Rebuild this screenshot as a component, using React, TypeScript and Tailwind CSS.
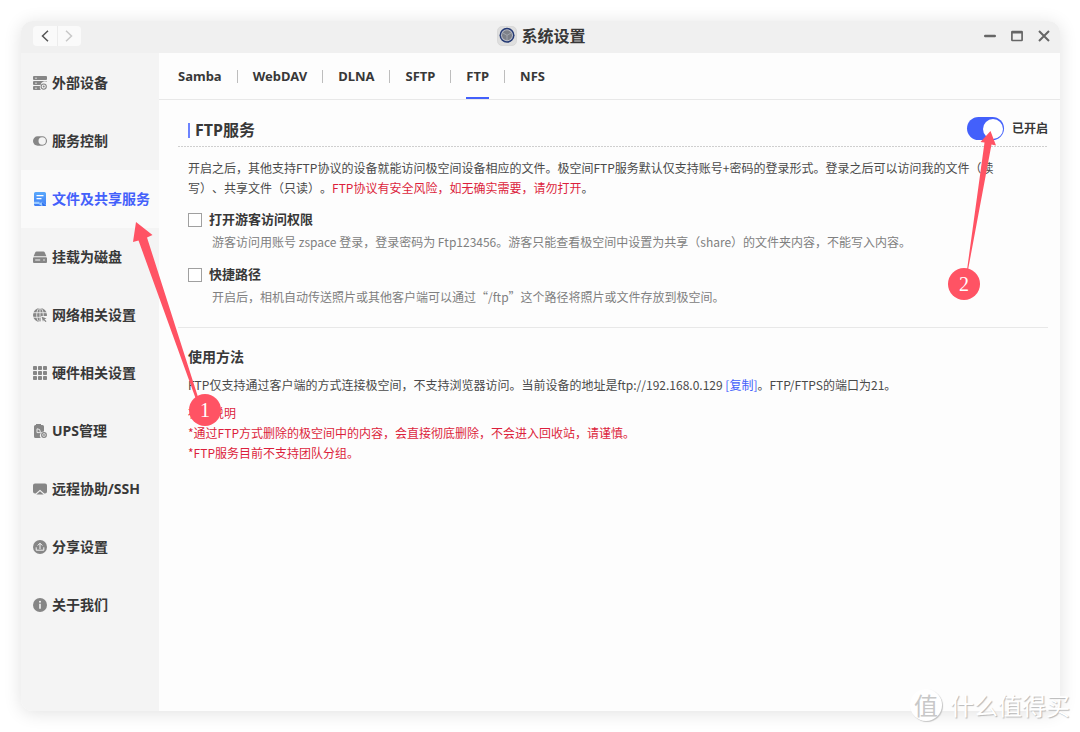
import { Fragment, type ReactNode } from "react";

type NavItem = { label: string; icon: ReactNode; active?: boolean };

const Icon = ({ children }: { children: ReactNode }) => (
  <svg viewBox="0 0 14 14" className="size-3.5 shrink-0" fill="#868686" aria-hidden="true">
    {children}
  </svg>
);

const navItems: NavItem[] = [
  {
    label: "外部设备",
    icon: (
      <Icon>
        <rect x="0" y="0" width="14" height="4" rx="1" />
        <path d="M1 5h12a1 1 0 0 1 1 .9A4.3 4.3 0 0 0 7.6 9H1a1 1 0 0 1-1-1V6a1 1 0 0 1 1-1z" />
        <path d="M1 10h6a4 4 0 0 0 .8 4H1a1 1 0 0 1-1-1v-2a1 1 0 0 1 1-1z" />
        <circle cx="10.7" cy="10.6" r="2.6" fill="none" stroke="#868686" strokeWidth="1.1" />
        <circle cx="10.7" cy="10.6" r="1" />
        <path d="M2 1.7h2v.7H2zM2 6.7h2v.7H2zM2 11.7h2v.7H2z" fill="#f4f4f4" />
      </Icon>
    ),
  },
  {
    label: "服务控制",
    icon: (
      <Icon>
        <rect x="0" y="2.3" width="14" height="9.4" rx="4.7" />
        <circle cx="9.2" cy="7" r="3.7" fill="#f4f4f4" />
      </Icon>
    ),
  },
  {
    label: "文件及共享服务",
    active: true,
    icon: (
      <svg viewBox="0 0 14 14" className="size-3.5 shrink-0" aria-hidden="true">
        <defs>
          <linearGradient id="docFill" x1="0" y1="0" x2="0" y2="1">
            <stop offset="0" stopColor="#5aa9fb" />
            <stop offset="1" stopColor="#3f7df6" />
          </linearGradient>
        </defs>
        <path d="M2.5 0h9A1.5 1.5 0 0 1 13 1.5V14H2.5A1.5 1.5 0 0 1 1 12.5v-11A1.5 1.5 0 0 1 2.5 0z" fill="url(#docFill)" />
        <path d="M3.5 3.6h7M3.5 6.6h5" stroke="#fff" strokeWidth="1.1" />
        <path d="M1 9.8h5.5v1.6L9 9.4l1.5 1.5L13 13v1H9l-2.500-1.600-1-.4H1z" fill="#9cccff" />
        <path d="M8.500 9.500 13 13.500v.5H9.500z" fill="#2f72ee" />
      </svg>
    ),
  },
  {
    label: "挂载为磁盘",
    icon: (
      <Icon>
        <path d="M3.6 1.5h6.8a1.5 1.5 0 0 1 1.4 1L13.4 6.3H.6L2.2 2.5a1.5 1.5 0 0 1 1.4-1z" />
        <path d="M1 7.2h12a1 1 0 0 1 1 1V12a1 1 0 0 1-1 1H1a1 1 0 0 1-1-1V8.2a1 1 0 0 1 1-1z" />
        <path d="M2.2 9.6h5v1h-5zM10.2 9.6h1.6v1h-1.6z" fill="#f4f4f4" />
      </Icon>
    ),
  },
  {
    label: "网络相关设置",
    icon: (
      <Icon>
        <circle cx="7" cy="7" r="7" />
        <g fill="none" stroke="#f4f4f4" strokeWidth=".8">
          <ellipse cx="7" cy="7" rx="3.3" ry="7" />
          <path d="M7 0v14M0 4.7h14M0 9.3h14" />
        </g>
        <path d="M8 8h6v6H8z" fill="#f4f4f4" />
        <path d="m8.5 8.5 5 2-2 .8 2 2-.9.8-2-2-.6 1.7z" />
      </Icon>
    ),
  },
  {
    label: "硬件相关设置",
    icon: (
      <Icon>
        {[0, 5, 10].map((y) =>
          [0, 5, 10].map((x) => <rect key={`${x}-${y}`} x={x} y={y} width="4" height="4" rx=".8" />),
        )}
      </Icon>
    ),
  },
  {
    label: "UPS管理",
    icon: (
      <Icon>
        <path d="M3 0h5v1h1.5A1.5 1.5 0 0 1 11 2.5v5a4 4 0 0 0-3.3 6.5H2.5A1.5 1.5 0 0 1 1 12.5v-10A1.5 1.5 0 0 1 2.5 1H3z" />
        <path d="M4 4.8v3.8h3.5l-.9-3.1z" fill="none" stroke="#f4f4f4" strokeWidth=".9" />
        <circle cx="11" cy="11" r="2.3" fill="none" stroke="#868686" strokeWidth="1.3" />
        <circle cx="11" cy="11" r=".9" />
      </Icon>
    ),
  },
  {
    label: "远程协助/SSH",
    icon: (
      <Icon>
        <path d="M2 1.5h10a2 2 0 0 1 2 2v6a2 2 0 0 1-2 2h-.7L7 7.7l-4.3 3.8H2a2 2 0 0 1-2-2v-6a2 2 0 0 1 2-2z" />
        <path d="m7 9.2 3.7 3.3H3.3z" />
      </Icon>
    ),
  },
  {
    label: "分享设置",
    icon: (
      <Icon>
        <circle cx="7" cy="7" r="7" />
        <path d="M7 9V3.5M4.7 5.5 7 3.2l2.3 2.3M3.2 7.3v2.9h7.6V7.3" fill="none" stroke="#f4f4f4" strokeWidth="1" />
      </Icon>
    ),
  },
  {
    label: "关于我们",
    icon: (
      <Icon>
        <circle cx="7" cy="7" r="7" />
        <circle cx="7" cy="3.7" r="1" fill="#f4f4f4" />
        <path d="M6.2 5.8h1.6v5H6.2z" fill="#f4f4f4" />
      </Icon>
    ),
  },
];

const tabs = ["Samba", "WebDAV", "DLNA", "SFTP", "FTP", "NFS"];

function AppLogo() {
  return (
    <svg viewBox="0 0 20 20" className="size-5" aria-hidden="true">
      <rect x=".5" y=".5" width="19" height="19" rx="4.5" fill="#dedede" stroke="#d0d0d0" strokeWidth=".6" />
      <circle cx="10" cy="9.3" r="7.5" fill="#253a74" />
      <circle cx="10" cy="9.3" r="6" fill="#b9bcc6" />
      <circle cx="10" cy="9.3" r="5" fill="#7d8088" />
      <path d="M10 9.3V14M10 9.3 6 7M10 9.3 14 7" stroke="#a9adb8" strokeWidth=".8" />
    </svg>
  );
}

function TitleBar() {
  return (
    <header className="grid h-8 shrink-0 grid-cols-[1fr_auto_1fr] items-center bg-[#f0f0f0] pr-2.5 pb-0.5 pl-3">
      <div className="flex h-5 w-12 divide-x divide-[#ececec] rounded bg-[#fafafa] text-[#555]">
        <button type="button" aria-label="后退" className="flex flex-1 items-center justify-center">
          <svg viewBox="0 0 8 12" className="h-3 w-2" fill="none" stroke="currentColor" strokeWidth="1.5">
            <path d="M7 .7 1.5 6 7 11.3" />
          </svg>
        </button>
        <button type="button" aria-label="前进" className="flex flex-1 items-center justify-center text-[#c8c8c8]">
          <svg viewBox="0 0 8 12" className="h-3 w-2" fill="none" stroke="currentColor" strokeWidth="1.5">
            <path d="M1 .7 6.5 6 1 11.3" />
          </svg>
        </button>
      </div>
      <div className="flex items-center gap-1">
        <AppLogo />
        <h1 className="text-base leading-5 font-bold">系统设置</h1>
      </div>
      <div className="flex items-center justify-end gap-[15px] text-[#666]">
        <button type="button" aria-label="最小化">
          <svg viewBox="0 0 12 12" className="size-3" stroke="currentColor" strokeWidth="2.4" strokeLinecap="round">
            <path d="M1.2 6h9.6" />
          </svg>
        </button>
        <button type="button" aria-label="最大化">
          <svg viewBox="0 0 12 12" className="size-3" fill="none" stroke="currentColor">
            <rect x=".9" y="1.5" width="10.2" height="9" rx=".5" strokeWidth="1.7" />
            <path d="M.9 2.3h10.2" strokeWidth="2.2" />
          </svg>
        </button>
        <button type="button" aria-label="关闭">
          <svg viewBox="0 0 12 12" className="size-3" stroke="currentColor" strokeWidth="2">
            <path d="m1 1 10 10M11 1 1 11" />
          </svg>
        </button>
      </div>
    </header>
  );
}

function Sidebar() {
  return (
    <nav className="w-[138px] shrink-0 bg-[#f4f4f4] pt-px">
      {navItems.map((item) => (
        <a
          key={item.label}
          href="#"
          className={
            item.active
              ? "flex h-[58px] items-center gap-[5px] bg-[#fafafa] pl-3 whitespace-nowrap text-[#4360fb]"
              : "flex h-[58px] items-center gap-[5px] pl-3 whitespace-nowrap"
          }
        >
          {item.icon}
          <span className="text-sm font-bold">{item.label}</span>
        </a>
      ))}
    </nav>
  );
}

function TabBar() {
  return (
    <div className="flex h-[47px] items-stretch gap-[15px] border-b border-[#e8e8e8] px-[19px]">
      {tabs.map((tab, i) => (
        <Fragment key={tab}>
          {i > 0 && <span className="h-[13px] w-px self-center bg-[#bdbdbd]" />}
          <a
            href="#"
            className={
              tab === "FTP"
                ? "flex items-center border-b-2 border-[#4360fb] pt-1 text-[13px] font-bold"
                : "flex items-center pt-0.5 text-[13px] font-bold"
            }
          >
            {tab}
          </a>
        </Fragment>
      ))}
    </div>
  );
}

function Option({ id, label, hint }: { id: string; label: string; hint: string }) {
  return (
    <div>
      <div className="flex h-5 items-center gap-[7px]">
        <input id={id} type="checkbox" className="size-3.5 appearance-none border border-[#a0a0a0] bg-white" />
        <label htmlFor={id} className="text-[13px] font-bold">
          {label}
        </label>
      </div>
      <p className="mt-0.5 pl-6 font-['Noto_Sans_CJK_SC',sans-serif] text-xs leading-5 text-[#808080]">{hint}</p>
    </div>
  );
}

function FtpPanel() {
  return (
    <section className="pr-3 pl-[19px]">
      <div className="flex h-[46px] items-end justify-between pl-2.5">
        <h2 className="flex items-center gap-[5px] pb-1 text-base leading-6 font-bold">
          <span className="h-[15px] w-0.5 bg-[#6c83ff]" />
          FTP服务
        </h2>
        <label className="flex items-center gap-2 pb-1.5 text-xs font-bold">
          <input type="checkbox" role="switch" defaultChecked className="peer sr-only" />
          <span className="flex h-[23px] w-[37px] items-center justify-end rounded-full bg-[#4360fb] p-px">
            <span className="size-5 rounded-full bg-white" />
          </span>
          已开启
        </label>
      </div>
      <div className="h-px bg-[repeating-linear-gradient(90deg,#cfcfcf_0_2px,transparent_2px_3px)]" />

      <div className="pt-[11px] pl-2.5">
        <p className="font-['Noto_Sans_CJK_SC',sans-serif] text-xs leading-5 text-[#4a4a4a]">
          开启之后，其他支持FTP协议的设备就能访问极空间设备相应的文件。极空间FTP服务默认仅支持账号+密码的登录形式。登录之后可以访问我的文件（读
          <br />
          写）、共享文件（只读）。<span className="text-[#dc1f3c]">FTP协议有安全风险，如无确实需要，请勿打开</span>。
        </p>
        <div className="mt-3 flex flex-col gap-[13px]">
          <Option
            id="guest"
            label="打开游客访问权限"
            hint="游客访问用账号 zspace 登录，登录密码为 Ftp123456。游客只能查看极空间中设置为共享（share）的文件夹内容，不能写入内容。"
          />
          <Option
            id="shortcut"
            label="快捷路径"
            hint="开启后，相机自动传送照片或其他客户端可以通过“/ftp”这个路径将照片或文件存放到极空间。"
          />
        </div>
      </div>

      <div className="mt-5 border-t border-[#e8e8e8] pt-[19px] pl-2.5">
        <h3 className="text-sm leading-5 font-bold">使用方法</h3>
        <div className="font-['Noto_Sans_CJK_SC',sans-serif] text-xs leading-5">
          <p className="mt-2 text-[#4a4a4a]">
            FTP仅支持通过客户端的方式连接极空间，不支持浏览器访问。当前设备的地址是ftp://192.168.0.129{" "}
            <button type="button" className="text-[#4360fb]">
              [复制]
            </button>
            。FTP/FTPS的端口为21。
          </p>
          <div className="mt-2 text-[#dc1f3c]">
            <p>补充说明</p>
            <p>*通过FTP方式删除的极空间中的内容，会直接彻底删除，不会进入回收站，请谨慎。</p>
            <p>*FTP服务目前不支持团队分组。</p>
          </div>
        </div>
      </div>
    </section>
  );
}

function Callouts() {
  return (
    <div className="pointer-events-none absolute top-0 left-0 font-['Liberation_Serif',serif] text-xl text-white">
      <svg width="1080" height="732" viewBox="0 0 1080 732" fill="#ff5364" className="absolute top-0 left-0 max-w-none" aria-hidden="true">
        <path d="m136 222 16.5 13-5.5 2.5L198 397l-2.5 1L138.500 240.500l-5.500 1.500z" />
        <path d="m990.500 131 5.500 14.500-4.500-1L968 270h-1l17.500-127.500-4-.5z" />
      </svg>
      <span className="absolute top-[394px] left-[189px] flex size-8 items-center justify-center rounded-full bg-[#ff5364]">1</span>
      <span className="absolute top-[268px] left-[948px] flex size-8 items-center justify-center rounded-full bg-[#ff5364]">2</span>
    </div>
  );
}

function Watermark() {
  return (
    <div className="pointer-events-none absolute right-2.5 bottom-[11px] flex items-center gap-2 font-['Noto_Sans_CJK_SC',sans-serif] text-white [text-shadow:1px_1px_1px_#b8b8b8]">
      <span className="flex size-8 items-center justify-center rounded-full bg-white text-2xl text-[#c8c8c8] shadow-[1px_1px_1px_#c4c4c4] [text-shadow:none]">
        值
      </span>
      <span className="text-2xl leading-8">什么值得买</span>
    </div>
  );
}

export default function App() {
  return (
    <div className="relative flex min-h-screen flex-col overflow-hidden bg-white p-[21px] pr-5 font-['Noto_Sans','Noto_Sans_CJK_SC',sans-serif] text-[#383838] [text-spacing-trim:space-all]">
      <div className="flex flex-1 flex-col overflow-hidden rounded-xl bg-[#fdfdfd] shadow-[0_2px_18px_rgba(0,0,0,0.12)]">
        <TitleBar />
        <div className="flex flex-1">
          <Sidebar />
          <main className="min-w-0 flex-1">
            <TabBar />
            <FtpPanel />
          </main>
        </div>
      </div>
      <Callouts />
      <Watermark />
    </div>
  );
}
